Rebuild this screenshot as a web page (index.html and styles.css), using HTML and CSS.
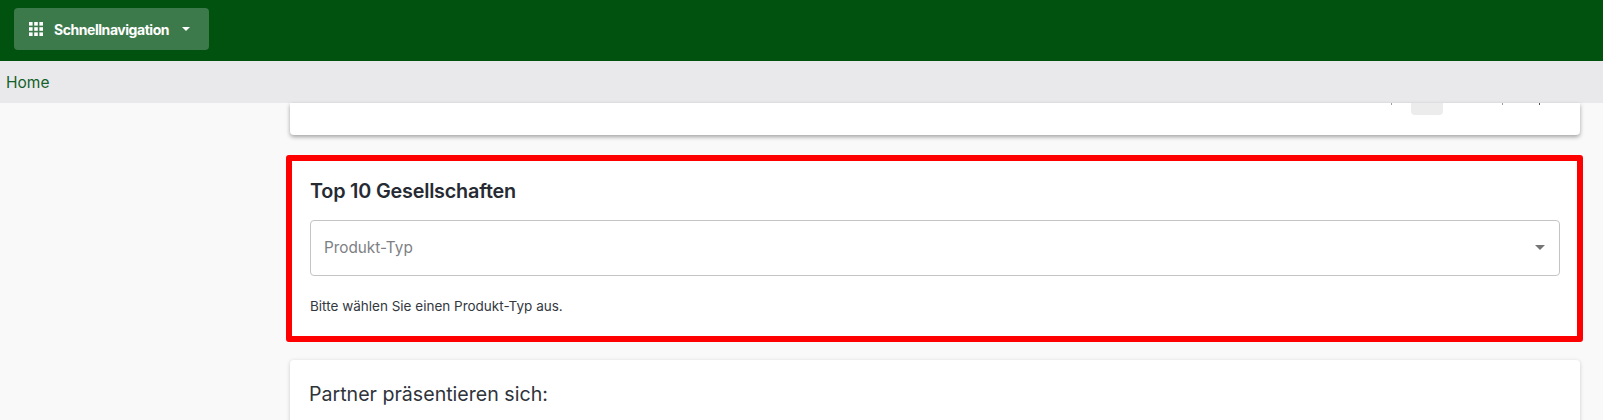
FILE: index.html
```html
<!DOCTYPE html>
<html lang="de">
<head>
  <meta charset="UTF-8" />
  <title>Top 10 Gesellschaften</title>
  <link rel="stylesheet" href="styles.css">
</head>
<body>

  <header class="topbar">
    <button class="quicknav" type="button">
      <svg class="quicknav-icon" width="14" height="14" viewBox="0 0 14 14" fill="#fff">
        <rect x="0" y="0" width="3.6" height="3.6"/><rect x="5.2" y="0" width="3.6" height="3.6"/><rect x="10.4" y="0" width="3.6" height="3.6"/>
        <rect x="0" y="5.2" width="3.6" height="3.6"/><rect x="5.2" y="5.2" width="3.6" height="3.6"/><rect x="10.4" y="5.2" width="3.6" height="3.6"/>
        <rect x="0" y="10.4" width="3.6" height="3.6"/><rect x="5.2" y="10.4" width="3.6" height="3.6"/><rect x="10.4" y="10.4" width="3.6" height="3.6"/>
      </svg>
      <span>Schnellnavigation</span>
      <i class="caret caret-white"></i>
    </button>
  </header>

  <nav class="breadcrumb"><a href="#">Home</a></nav>

  <main class="content">
    <section class="card card-top">
      <i class="speck speck-a"></i>
      <div class="pager-btn"></div>
      <i class="speck speck-b"></i>
      <i class="speck speck-c"></i>
    </section>

    <section class="card-marked">
      <h2>Top 10 Gesellschaften</h2>
      <div class="select">
        <span>Produkt-Typ</span>
        <i class="caret caret-grey"></i>
      </div>
      <p class="hint">Bitte wählen Sie einen Produkt-Typ aus.</p>
    </section>

    <section class="card card-partner">
      <h3>Partner präsentieren sich:</h3>
    </section>
  </main>

</body>
</html>
```

FILE: styles.css
```css
html, body {
  margin: 0;
  height: 420px;
  overflow: hidden;
}

body {
  font-family: "Inter", "Noto Sans", sans-serif;
  background-color: #f9f9f9;
  color: #262b33;
}

.topbar {
  height: 61px;
  background-color: #02520f;
  padding: 8px 14px;
  box-sizing: border-box;
}

.quicknav {
  display: flex;
  align-items: center;
  width: 195px;
  height: 42px;
  padding: 0 15px;
  border: none;
  border-radius: 4px;
  background-color: #3d7a4b;
  color: #fff;
  font-family: inherit;
  font-size: 14px;
  font-weight: 700;
  letter-spacing: -0.45px;
}

.quicknav-icon {
  margin-right: 11px;
}

.caret {
  display: block;
  width: 0;
  height: 0;
}

.caret-white {
  margin-left: 13px;
  border-left: 4px solid transparent;
  border-right: 4px solid transparent;
  border-top: 4px solid #fff;
}

.caret-grey {
  border-left: 5px solid transparent;
  border-right: 5px solid transparent;
  border-top: 5px solid #757575;
}

.breadcrumb {
  height: 42px;
  padding-left: 6px;
  background-color: #e9e9eb;
  font-size: 15.5px;
  line-height: 44px;
}

.breadcrumb a {
  color: #14602a;
  text-decoration: none;
}

.content {
  padding: 0 23px 0 290px;
}

.card {
  background-color: #fff;
  border-radius: 4px;
  box-shadow: 0 2px 4px rgba(0, 0, 0, 0.35);
}

.card-top {
  height: 32px;
  display: flex;
  justify-content: flex-end;
  border-radius: 0 0 4px 4px;
}

.pager-btn {
  width: 32px;
  height: 12px;
  background-color: #ececec;
  border-radius: 0 0 4px 4px;
}

.speck {
  display: block;
  width: 1px;
  height: 2px;
  background-color: #9a9a9a;
}

.speck-a {
  margin-right: 19px;
}

.speck-b {
  margin-left: 59px;
}

.speck-c {
  margin-left: 36px;
  margin-right: 40px;
  background-color: #555;
}

.card-marked {
  height: 187px;
  margin: 20px -3px 0 -4px;
  padding: 18px 17px 0 18px;
  box-sizing: border-box;
  background-color: #fff;
  border: 6.5px solid #ff0000;
  border-radius: 3px;
}

.card-marked h2 {
  margin: 0;
  font-size: 19.8px;
  font-weight: 600;
  line-height: 24px;
  letter-spacing: -0.2px;
}

.select {
  display: flex;
  align-items: center;
  justify-content: space-between;
  height: 56px;
  margin-top: 17px;
  padding: 0 14px 2px 13px;
  box-sizing: border-box;
  border: 1px solid #c4c4c4;
  border-radius: 4px;
  color: #7d7f85;
  font-size: 15.3px;
}

.hint {
  margin: 21px 0 0;
  font-size: 13.5px;
  line-height: 18px;
  color: #33383f;
}

.card-partner {
  height: 120px;
  margin-top: 18px;
  padding: 22px 19px;
  box-sizing: border-box;
  box-shadow: 0 1px 4px rgba(0, 0, 0, 0.18);
}

.card-partner h3 {
  margin: 0;
  font-size: 19.6px;
  font-weight: 400;
  line-height: 24px;
  color: #2f343b;
}
```
